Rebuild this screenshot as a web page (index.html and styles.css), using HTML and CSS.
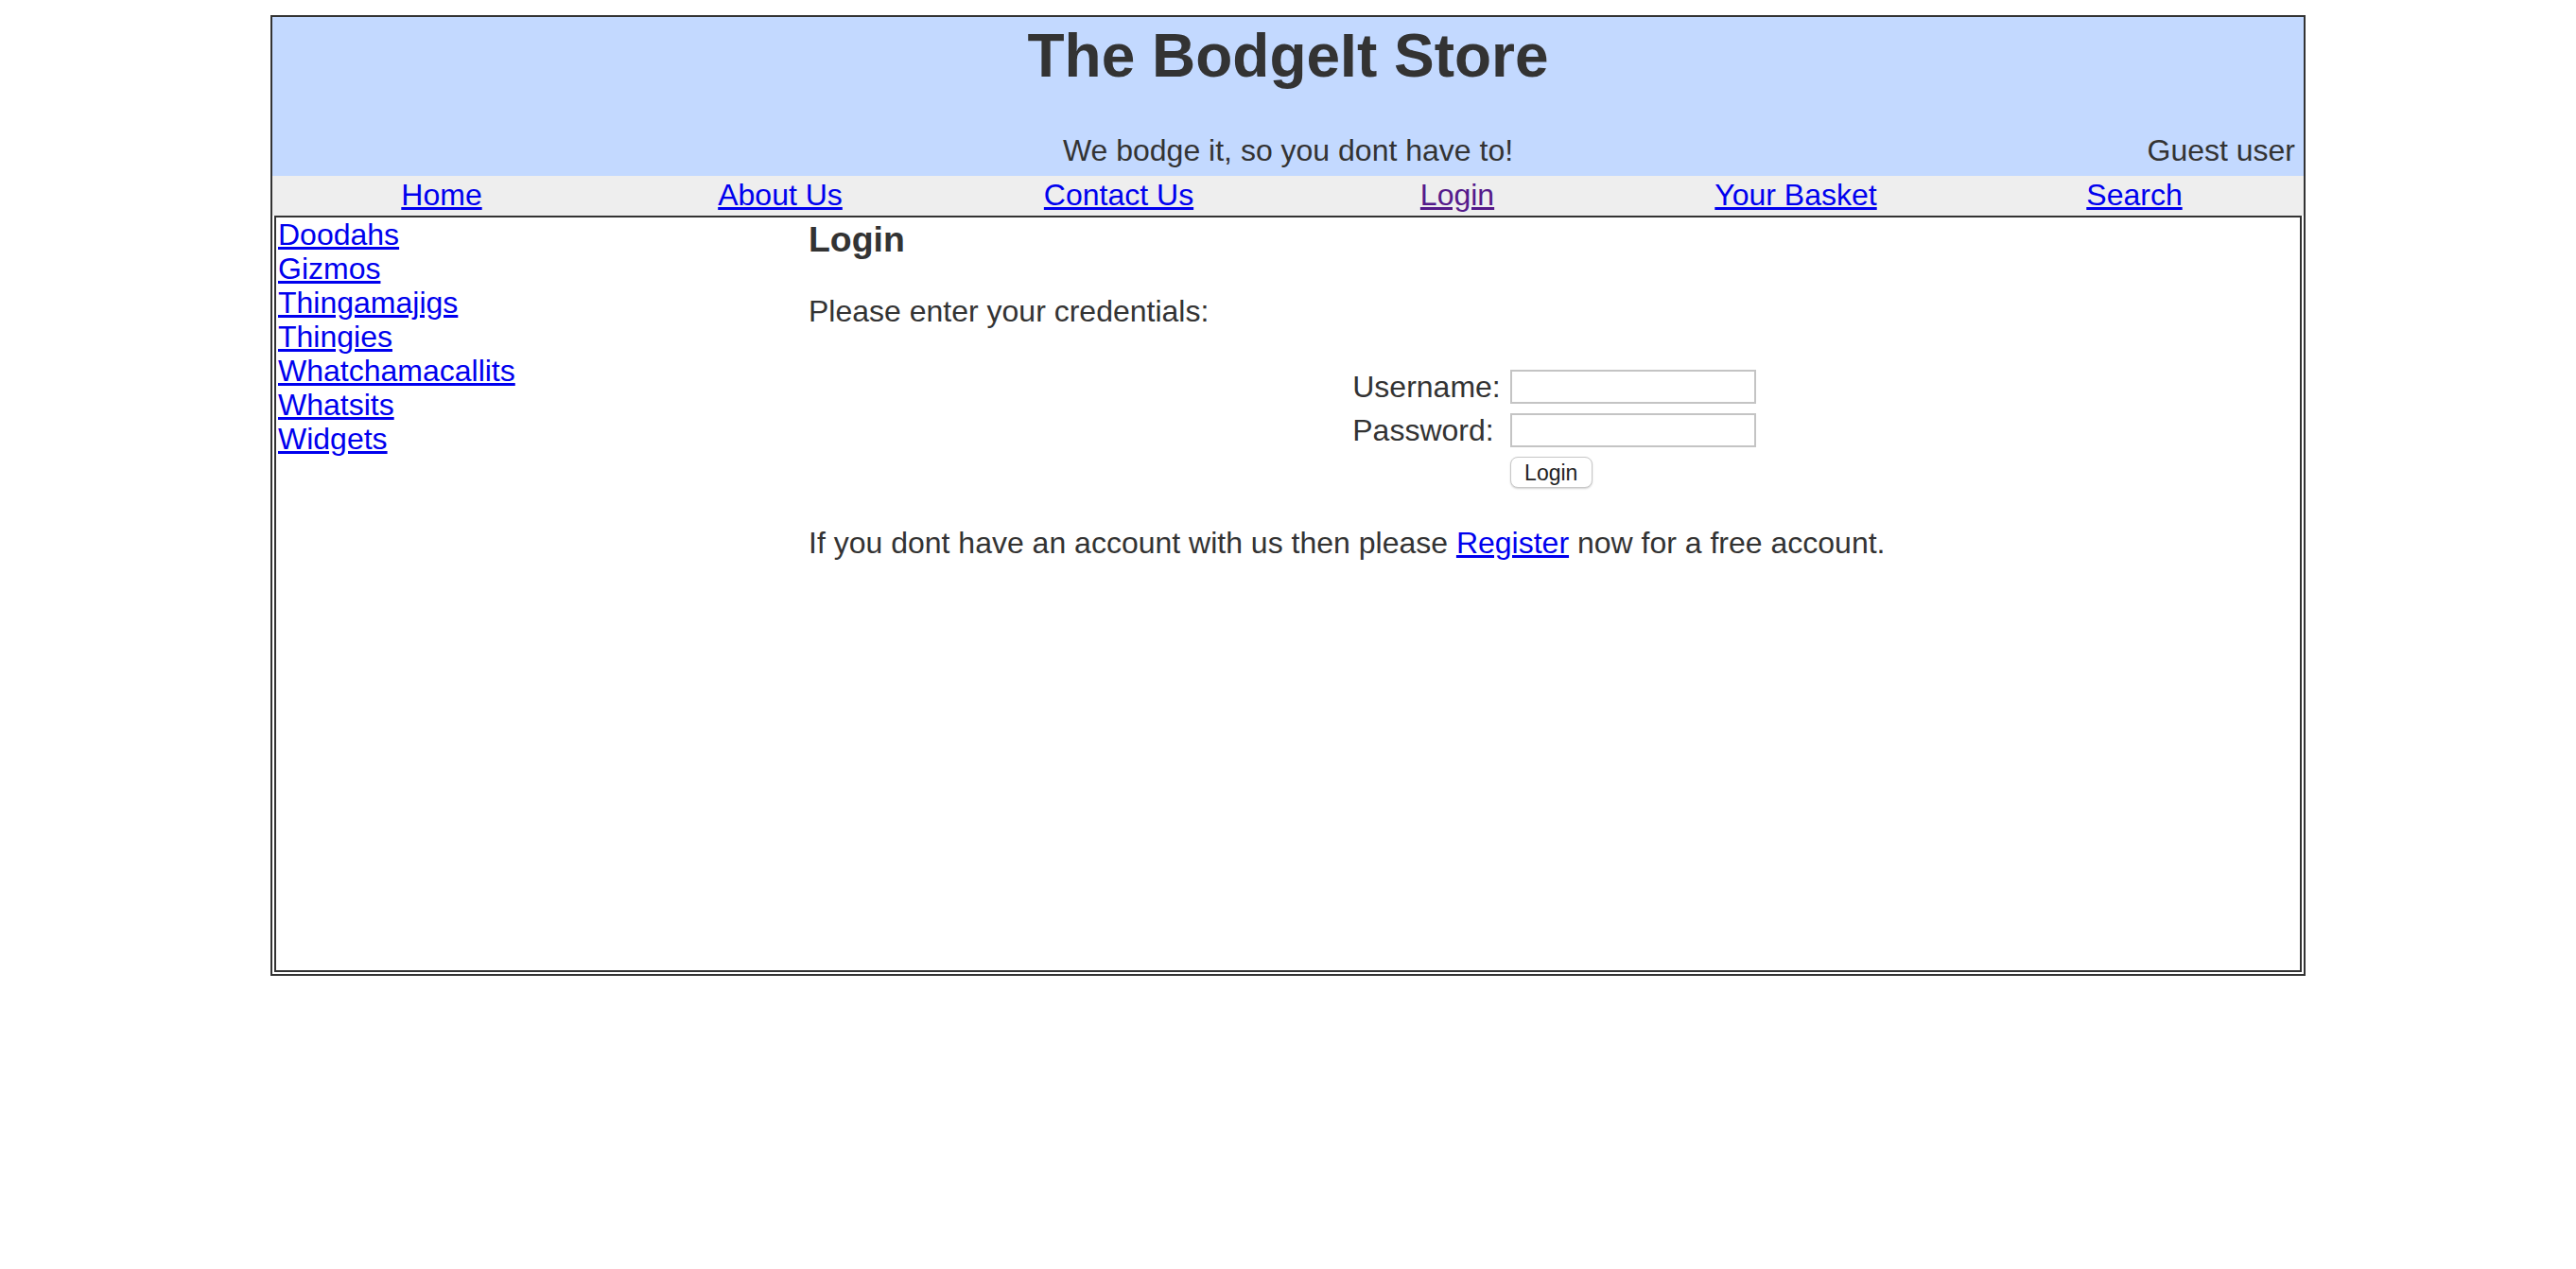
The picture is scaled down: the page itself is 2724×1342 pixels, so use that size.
FILE: index.html
```html
<!DOCTYPE html>
<html lang="en">
<head>
<meta charset="utf-8">
<title>The BodgeIt Store</title>
<link rel="stylesheet" href="styles.css">
</head>
<body>
<div class="store">
  <header class="masthead">
    <h1 class="title">The BodgeIt Store</h1>
    <div class="subrow">
      <div class="spacer"></div>
      <div class="tagline">We bodge it, so you dont have to!</div>
      <div class="user">Guest user</div>
    </div>
  </header>
  <nav class="menu">
    <div class="menu-cell"><a href="#">Home</a></div>
    <div class="menu-cell"><a href="#">About Us</a></div>
    <div class="menu-cell"><a href="#">Contact Us</a></div>
    <div class="menu-cell"><a href="#" class="visited">Login</a></div>
    <div class="menu-cell"><a href="#">Your Basket</a></div>
    <div class="menu-cell"><a href="#">Search</a></div>
  </nav>
  <div class="body-wrap">
    <div class="body-box">
      <aside class="cats">
        <a href="#">Doodahs</a>
        <a href="#">Gizmos</a>
        <a href="#">Thingamajigs</a>
        <a href="#">Thingies</a>
        <a href="#">Whatchamacallits</a>
        <a href="#">Whatsits</a>
        <a href="#">Widgets</a>
      </aside>
      <main class="main">
        <h3 class="heading">Login</h3>
        <p class="prompt">Please enter your credentials:</p>
        <form class="login-form">
          <label class="lbl" for="username">Username:</label>
          <input class="field" id="username" type="text">
          <label class="lbl" for="password">Password:</label>
          <input class="field" id="password" type="password">
          <div class="spacer"></div>
          <button class="btn" type="button">Login</button>
        </form>
        <p class="register">If you dont have an account with us then please <a href="#">Register</a> now for a free account.</p>
      </main>
    </div>
  </div>
</div>
</body>
</html>
```

FILE: styles.css
```css
html, body {
  margin: 0;
  padding: 0;
  background: #ffffff;
}

body {
  font-family: "Liberation Sans", Arial, Helvetica, sans-serif;
  font-size: 32px;
  color: #333333;
}

a {
  color: #0000ee;
  text-decoration: underline;
}

a.visited {
  color: #551a8b;
}

.store {
  box-sizing: border-box;
  width: 2152px;
  margin: 16px auto 0;
  border: 2px solid #333333;
}

.masthead {
  box-sizing: border-box;
  height: 168px;
  padding-top: 4px;
  background: #c3d9ff;
}

.title {
  margin: 0;
  font-size: 64px;
  line-height: 74px;
  font-weight: bold;
  text-align: center;
  color: #333333;
}

.subrow {
  margin-top: 45px;
  padding: 0 9px;
  display: grid;
  grid-template-columns: 3fr 4fr 3fr;
  line-height: 36px;
}

.tagline {
  text-align: center;
  white-space: nowrap;
}

.user {
  text-align: right;
}

.menu {
  box-sizing: border-box;
  height: 42px;
  padding-top: 2px;
  display: grid;
  grid-template-columns: repeat(6, 1fr);
  background: #eeeeee;
  line-height: 36px;
}

.menu-cell {
  text-align: center;
}

.body-wrap {
  padding: 0 2px 2px;
}

.body-box {
  box-sizing: border-box;
  height: 800px;
  border: 2px solid #333333;
  display: grid;
  grid-template-columns: 563px 1fr;
}

.cats {
  padding-left: 2px;
  display: flex;
  flex-direction: column;
  align-items: flex-start;
  line-height: 36px;
}

.main {
  padding-top: 2px;
}

.heading {
  margin: 0 0 36px;
  font-size: 37.44px;
  line-height: 43px;
  font-weight: bold;
}

.prompt {
  margin: 0;
  line-height: 36px;
}

.login-form {
  margin-top: 44px;
  display: grid;
  grid-template-columns: auto auto;
  justify-content: center;
  column-gap: 10px;
  row-gap: 10px;
  align-items: center;
  line-height: 36px;
}

.lbl {
  justify-self: start;
}

.field {
  box-sizing: border-box;
  width: 260px;
  height: 36px;
  margin: 0;
  padding: 2px 4px;
  border: 2px solid #c4c4c4;
  background: #ffffff;
  font-family: "Liberation Sans", Arial, sans-serif;
  font-size: 26px;
}

.btn {
  justify-self: start;
  box-sizing: border-box;
  width: 87px;
  height: 33px;
  margin: 0;
  padding: 0;
  border: 1px solid #c8c8c8;
  border-radius: 8px;
  background: #ffffff;
  box-shadow: 0 1px 2px rgba(0, 0, 0, 0.18);
  color: #222222;
  font-family: "Liberation Sans", Arial, sans-serif;
  font-size: 23px;
  line-height: 30px;
}

.register {
  margin: 40px 0 0;
  line-height: 36px;
}
```
